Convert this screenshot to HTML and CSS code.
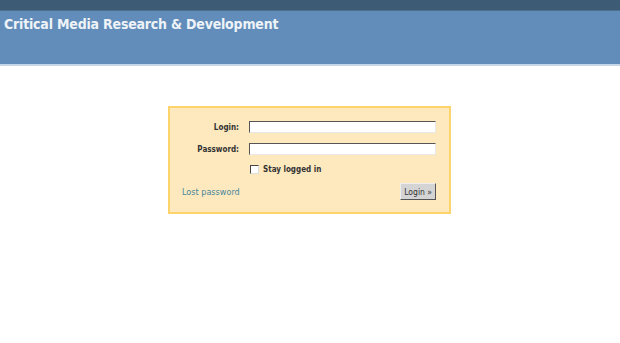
FILE: index.html
```html
<!DOCTYPE html>
<html lang="en">
  <head>
    <meta charset="UTF-8" />
    <title>Login - Critical Media Research &amp; Development</title>
    <link rel="stylesheet" href="styles.css">
  </head>
  <body>
    <div class="topbar"></div>
    <div class="header">
      <h1 class="site-title">Critical Media Research &amp; Development</h1>
    </div>
    <main class="content">
      <form class="login-box">
        <div class="row">
          <label class="label" for="user">Login:</label>
          <input class="field" id="user" type="text">
        </div>
        <div class="row">
          <label class="label" for="pass">Password:</label>
          <input class="field" id="pass" type="password">
        </div>
        <div class="row check-row">
          <span class="label"></span>
          <label class="remember"><input class="check" type="checkbox"> Stay logged in</label>
        </div>
        <div class="bottom-row">
          <a class="lost" href="#">Lost password</a>
          <button class="submit" type="button">Login &raquo;</button>
        </div>
      </form>
    </main>
  </body>
</html>
```

FILE: styles.css
```css
* {
  margin: 0;
  padding: 0;
  box-sizing: border-box;
}

body {
  background: #fff;
  font-family: "DejaVu Sans Condensed", "DejaVu Sans", sans-serif;
  font-size: 9px;
  color: #333;
}

.topbar {
  height: 11px;
  background: #3e5b75;
  border-bottom: 1px solid #4f6f8f;
}

.header {
  height: 55px;
  background: #628dba;
  border-bottom: 2px solid #c5d6e8;
  padding: 5px 4px 0;
}

.site-title {
  font-size: 14px;
  font-weight: bold;
  color: #eef3f8;
  letter-spacing: -0.2px;
}

.content {
  display: flex;
  justify-content: center;
  padding-top: 40px;
  padding-right: 1px;
}

.login-box {
  width: 283px;
  background: #fee9bf;
  border: 2px solid #fdd36c;
  padding: 13px 13px 12px 12px;
}

.row {
  display: flex;
  align-items: center;
  margin-bottom: 10px;
}

.check-row {
  margin-bottom: 9px;
}

.label {
  width: 57px;
  text-align: right;
  font-size: 8px;
  font-weight: bold;
  color: #333;
  margin-right: 10px;
}

.field {
  width: 187px;
  height: 12px;
  background: #fff;
  border: 1px solid;
  border-color: #555 #e8e8e8 #e8e8e8 #555;
}

.remember {
  display: flex;
  align-items: center;
  font-size: 8px;
  font-weight: bold;
  color: #333;
}

.check {
  width: 9px;
  height: 9px;
  margin: 0 4px 0 1px;
  appearance: none;
  background: #fff;
  border: 1px solid;
  border-color: #444 #ddd #ddd #444;
}

.bottom-row {
  display: flex;
  justify-content: space-between;
  align-items: center;
}

.lost {
  color: #47879a;
  text-decoration: none;
}

.submit {
  font-family: "DejaVu Sans Condensed", "DejaVu Sans", sans-serif;
  font-size: 8.5px;
  color: #333;
  background: #d4d4d4;
  border: 1px solid;
  border-color: #eee #555 #555 #eee;
  padding: 2px 3px;
  height: 17px;
}
```
